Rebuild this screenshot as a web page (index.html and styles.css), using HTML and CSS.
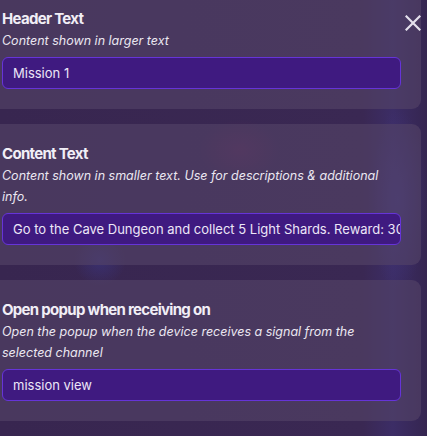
FILE: index.html
```html
<!DOCTYPE html>
<html>
<head>
<meta charset="utf-8">
<link rel="stylesheet" href="styles.css">
</head>
<body>
<div class="panel">
  <div class="list">
    <section class="card">
      <div class="title">Header Text</div>
      <div class="desc">Content shown in larger text</div>
      <div class="field">Mission 1</div>
    </section>
    <section class="card">
      <div class="title">Content Text</div>
      <div class="desc">Content shown in smaller text. Use for descriptions &amp; additional info.</div>
      <div class="field">Go to the Cave Dungeon and collect 5 Light Shards. Reward: 300 Energy</div>
    </section>
    <section class="card">
      <div class="title">Open popup when receiving on</div>
      <div class="desc">Open the popup when the device receives a signal from the selected channel</div>
      <div class="field">mission view</div>
    </section>
  </div>
  <button class="close" aria-label="Close">
    <svg width="16" height="16" viewBox="0 0 16 16"><path d="M1.5 1.5 L14.5 14.5 M14.5 1.5 L1.5 14.5" stroke="#e4e0ec" stroke-width="2.2" stroke-linecap="square"/></svg>
  </button>
</div>
</body>
</html>
```
FILE: styles.css
```css
html, body {
  margin: 0;
  padding: 0;
  width: 427px;
  height: 436px;
  overflow: hidden;
}
body {
  font-family: Inter, "Noto Sans", sans-serif;
  color: #f1eef6;
  background: #372650;
}
.panel {
  position: relative;
  width: 427px;
  height: 436px;
  overflow: hidden;
  background:
    radial-gradient(ellipse 30px 90px at 398px 200px, rgba(70,60,140,0.55), transparent),
    radial-gradient(ellipse 40px 30px at 240px 150px, rgba(120,40,90,0.35), transparent),
    radial-gradient(ellipse 26px 26px at 100px 260px, rgba(60,60,150,0.45), transparent),
    linear-gradient(90deg, #382650 0%, #3a2853 85%, #3c2d66 92%, #352550 100%);
}
.list {
  display: flex;
  flex-direction: column;
  gap: 15px;
  margin-top: -11px;
  margin-left: -14px;
  width: 435px;
}
.card {
  background: rgba(84, 68, 104, 0.62);
  border-radius: 9px;
  padding: 20px 20px 20px 16px;
  display: flex;
  flex-direction: column;
}
.title {
  font-size: 15px;
  font-weight: 700;
  line-height: 20px;
  letter-spacing: -0.7px;
}
.desc {
  font-size: 12.5px;
  font-style: italic;
  line-height: 21px;
  color: #ebe7f1;
  margin-top: 1px;
}
.field {
  margin-top: 6px;
  height: 32px;
  box-sizing: border-box;
  border: 1px solid #6634d8;
  background: #3f1a80;
  border-radius: 6px;
  padding: 0 10px;
  font-size: 13px;
  line-height: 30px;
  white-space: nowrap;
  overflow: hidden;
  color: #ece6f7;
}
.close {
  position: absolute;
  top: 15px;
  left: 405px;
  width: 16px;
  height: 16px;
  padding: 0;
  border: 0;
  background: none;
  display: flex;
}
```
